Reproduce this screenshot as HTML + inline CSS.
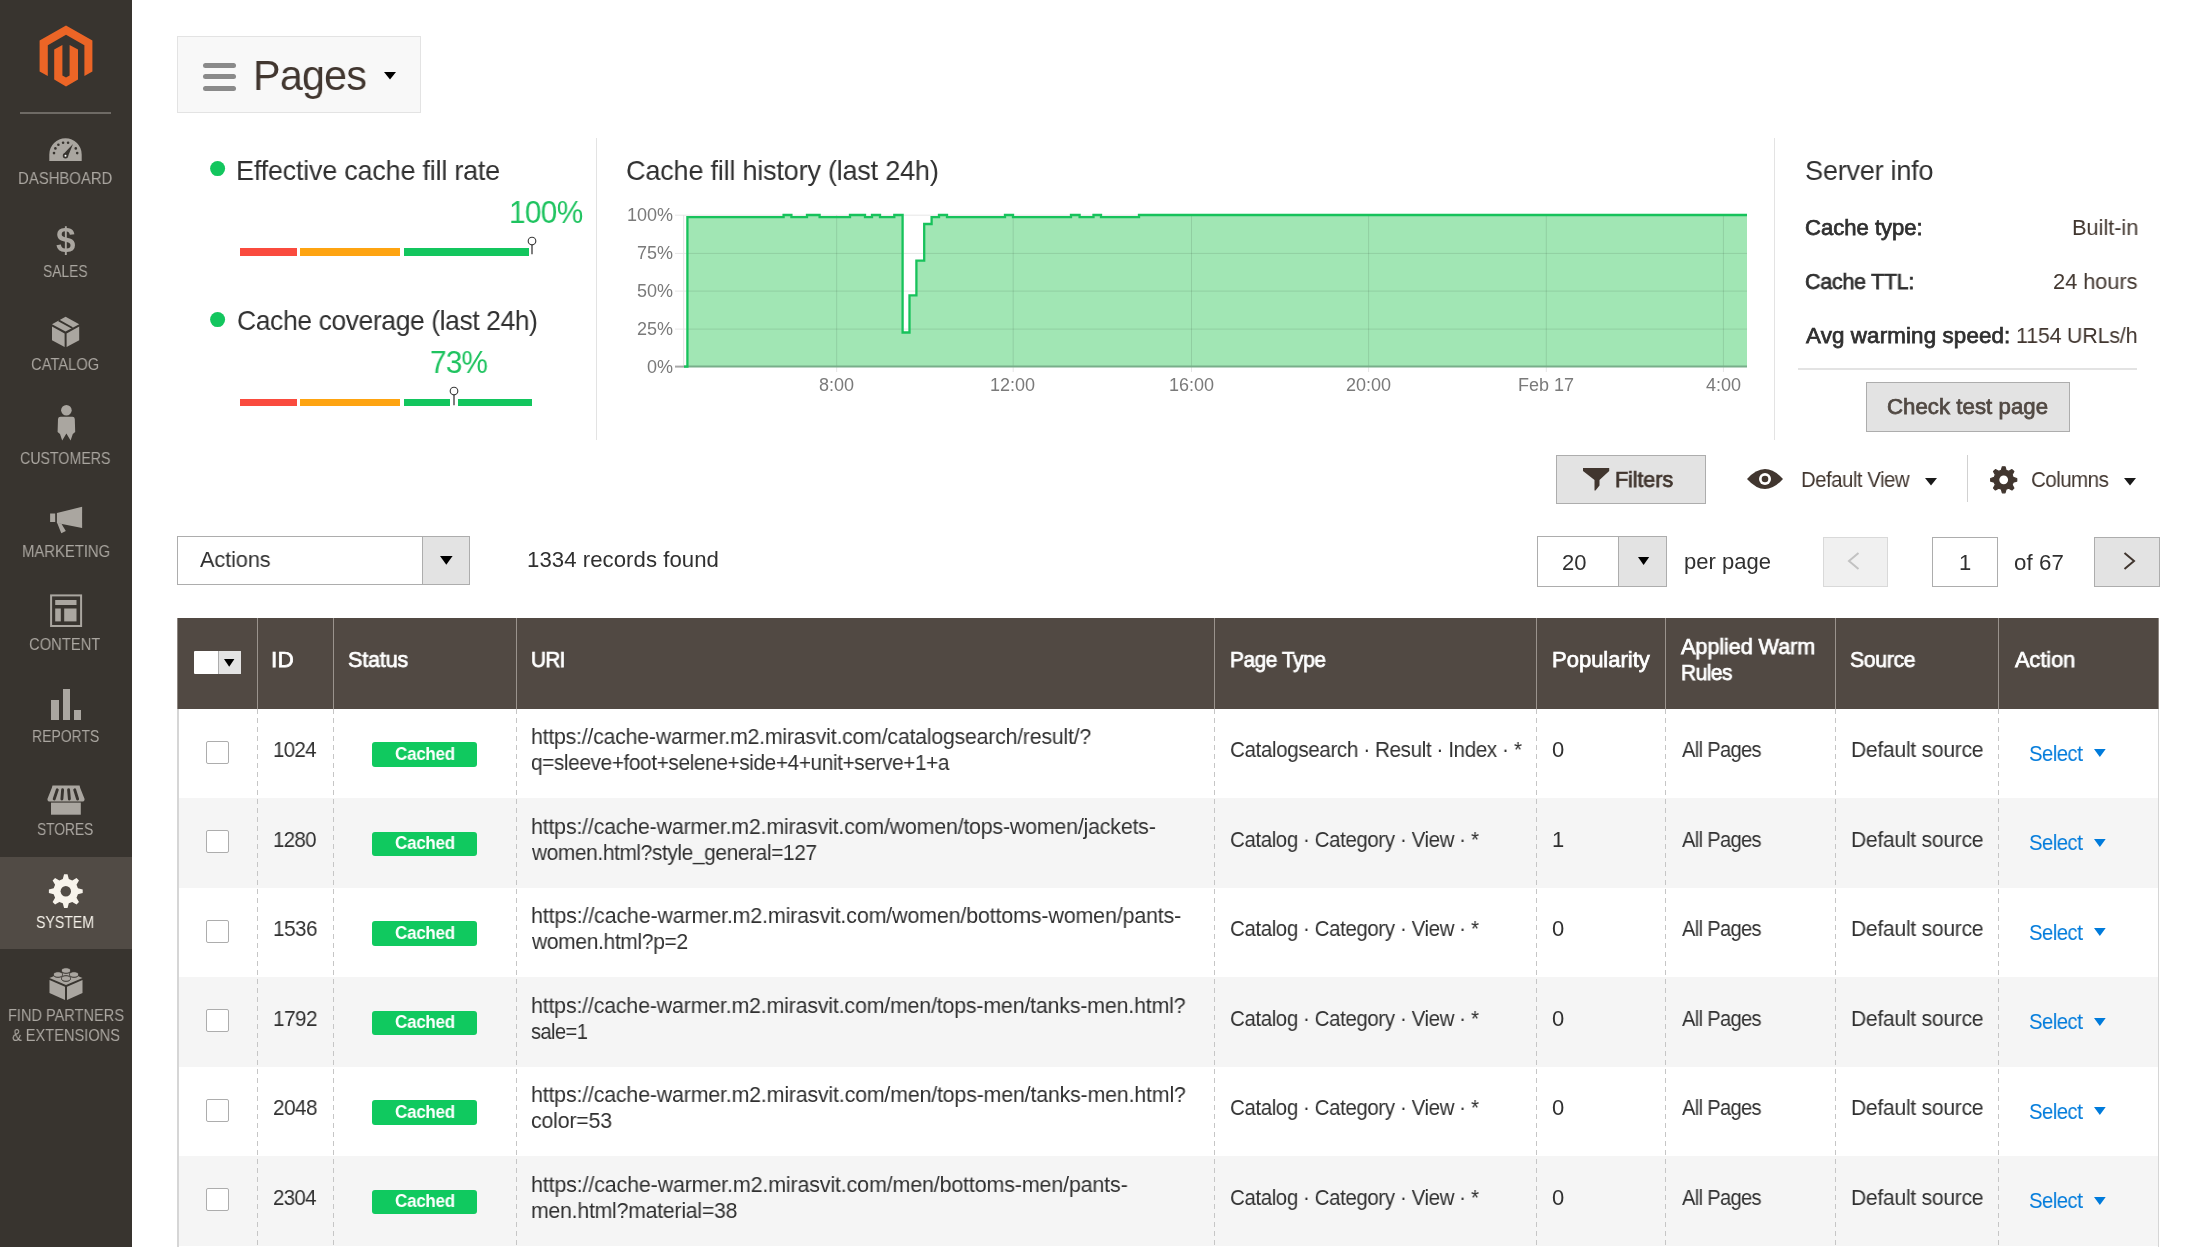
<!DOCTYPE html>
<html><head><meta charset="utf-8">
<style>
*{box-sizing:border-box;margin:0;padding:0}
html,body{width:2205px;height:1247px;overflow:hidden;background:#fff;font-family:"Liberation Sans",sans-serif;color:#303030;position:relative}
.t{position:absolute;white-space:nowrap;line-height:1;will-change:transform}
svg{position:absolute;overflow:visible}

</style></head><body>

<div style="position:absolute;left:0px;top:0px;width:132px;height:1247px;background:#38342f"></div>
<div style="position:absolute;left:0px;top:856.5px;width:132px;height:92.5px;background:#514b45"></div>
<svg style="left:0px;top:0px" width="132" height="100" viewBox="0 0 132 100"><path d="M66 25.6 L92.4 40.6 L92.4 71.6 L84.4 76.1 L84.4 45.2 L66 34.8 L47.8 45.2 L47.8 76.1 L39.6 71.6 L39.6 40.6 Z M54.2 49.6 L62.4 45 L62.4 75.4 L66 77.6 L69.6 75.4 L69.6 45 L78 49.6 L78 79.4 L66 86.4 L54.2 79.4 Z" fill="#ec6526"/></svg>
<div style="position:absolute;left:20px;top:112px;width:91px;height:2px;background:#6e6a65"></div>
<svg style="left:49px;top:138px" width="34" height="24" viewBox="0 0 34 24">
<path d="M0.3 16.5 A16.2 16.2 0 0 1 32.7 16.5 L32.7 23.1 L0.3 23.1 Z" fill="#aaa6a0"/>
<g fill="#38342f"><circle cx="5" cy="15.1" r="1.3"/><circle cx="6.4" cy="10.4" r="1.3"/><circle cx="9.4" cy="6.8" r="1.3"/><circle cx="14.1" cy="4.8" r="1.3"/><circle cx="19.1" cy="4.8" r="1.3"/><circle cx="26.8" cy="10.4" r="1.3"/><circle cx="28.2" cy="15.1" r="1.3"/>
<path d="M14.3 16.3 L24 6 L18.7 19 Z"/><circle cx="16.5" cy="17.7" r="2.7"/></g>
<circle cx="16.5" cy="17.7" r="1" fill="#fff"/>
</svg>
<svg style="left:0px;top:300px" width="132" height="150" viewBox="0 300 132 150">
<path d="M65.6 316.8 L79.2 324.2 L65.6 331.6 L52 324.2 Z" fill="#aaa6a0"/>
<path d="M52 326.6 L64.6 333.4 L64.6 347 L52 340.2 Z" fill="#aaa6a0"/>
<path d="M79.2 326.6 L66.6 333.4 L66.6 347 L79.2 340.2 Z" fill="#aaa6a0"/>
<path d="M58.6 320.4 L72.4 328" stroke="#38342f" stroke-width="1.8"/>
<circle cx="66.4" cy="410.2" r="5.3" fill="#aaa6a0"/>
<path d="M60.5 416.8 L72.5 416.8 Q74.6 416.8 74.8 419 L75.2 432 L72.8 434 L70.6 440.4 L66.4 433.5 L62.2 440.4 L60 434 L57.6 432 L58 419 Q58.2 416.8 60.5 416.8 Z" fill="#aaa6a0"/>
</svg>
<svg style="left:0px;top:490px" width="132" height="150" viewBox="0 490 132 150">
<path d="M50.1 513.5 L55.2 513.5 L55.2 522 L50.1 522 Z" fill="#aaa6a0"/>
<path d="M56.9 513 L82.1 506.8 L82.1 528.1 L56.9 523 Z" fill="#aaa6a0"/>
<path d="M57.1 522.8 L61.3 523.6 L65.8 531 L61.3 533.2 Z" fill="#aaa6a0"/>
<rect x="51.1" y="595.4" width="30" height="30.6" fill="none" stroke="#aaa6a0" stroke-width="2"/>
<rect x="55.2" y="600" width="21.3" height="5" fill="#aaa6a0"/>
<rect x="55.2" y="608.5" width="5.6" height="12.9" fill="#aaa6a0"/>
<rect x="64.2" y="608.5" width="12.3" height="12.9" fill="#aaa6a0"/>
</svg>
<div style="position:absolute;left:51px;top:699.6px;width:7.5px;height:20.399999999999977px;background:#aaa6a0"></div>
<div style="position:absolute;left:63px;top:688.8px;width:7px;height:31.200000000000045px;background:#aaa6a0"></div>
<div style="position:absolute;left:73.7px;top:709.7px;width:6.8999999999999915px;height:10.299999999999955px;background:#aaa6a0"></div>
<svg style="left:0px;top:770px" width="132" height="50" viewBox="0 770 132 50">
<path d="M52.5 785.6 L79.6 785.6 L80.2 788 L84.6 799 Q84.6 801.6 82 801.6 L50 801.6 Q47.4 801.6 47.4 799 L51.8 788 Z" fill="#aaa6a0"/>
<g stroke="#38342f" stroke-width="2.9" stroke-linecap="round"><path d="M57.3 789.8 L54.2 799"/><path d="M62.6 789.8 L61.9 799"/><path d="M68.6 789.8 L69.4 799"/><path d="M74.7 789.8 L77.6 799"/></g>
<rect x="51" y="802.6" width="29.8" height="12.1" fill="#aaa6a0"/>
</svg>
<svg style="left:49px;top:873.5px" width="34" height="35" viewBox="0 0 34 35"><path d="M28.93 14.19 L33.71 15.47 L33.71 18.93 L28.93 20.21 L27.51 23.65 L29.98 27.93 L27.53 30.38 L23.25 27.91 L19.81 29.33 L18.53 34.11 L15.07 34.11 L13.79 29.33 L10.35 27.91 L6.07 30.38 L3.62 27.93 L6.09 23.65 L4.67 20.21 L-0.11 18.93 L-0.11 15.47 L4.67 14.19 L6.09 10.75 L3.62 6.47 L6.07 4.02 L10.35 6.49 L13.79 5.07 L15.07 0.29 L18.53 0.29 L19.81 5.07 L23.25 6.49 L27.53 4.02 L29.98 6.47 L27.51 10.75 Z" fill="#f7f3eb"/><circle cx="16.8" cy="17.2" r="5.2" fill="#514b45"/></svg>
<svg style="left:49px;top:967px" width="34" height="33" viewBox="0 0 34 33">
<path d="M17 4 L33.5 11 L17 18 L0.5 11 Z" fill="#aaa6a0"/>
<path d="M0.5 13 L16 19.7 L16 33 L0.5 26 Z" fill="#aaa6a0"/>
<path d="M33.5 13 L18 19.7 L18 33 L33.5 26 Z" fill="#aaa6a0"/>
<g fill="#aaa6a0" stroke="#38342f" stroke-width="1"><ellipse cx="17" cy="3.5" rx="4.5" ry="2.8"/><ellipse cx="9" cy="7.5" rx="4.5" ry="2.8"/><ellipse cx="25" cy="7.5" rx="4.5" ry="2.8"/><ellipse cx="17" cy="11.5" rx="4.5" ry="2.8"/></g>
</svg>
<div style="position:absolute;left:177px;top:36px;width:244px;height:76.5px;background:#f8f8f8;border:1px solid #e3e3e3"></div>
<div style="position:absolute;left:202.8px;top:63px;width:33.099999999999994px;height:5px;background:#8a8a8a;border-radius:2.5px"></div>
<div style="position:absolute;left:202.8px;top:74px;width:33.099999999999994px;height:5px;background:#8a8a8a;border-radius:2.5px"></div>
<div style="position:absolute;left:202.8px;top:85.5px;width:33.099999999999994px;height:5.0px;background:#8a8a8a;border-radius:2.5px"></div>
<svg style="left:383.5px;top:72.4px" width="12" height="8" viewBox="0 0 12 8"><path d="M0 0 L12 0 L6 7.6 Z" fill="#000"/></svg>
<svg style="left:210px;top:161px" width="15" height="15"><circle cx="7.6" cy="7.6" r="7.5" fill="#13c65e"/></svg>
<svg style="left:210px;top:311.5px" width="15" height="15"><circle cx="7.6" cy="7.6" r="7.5" fill="#13c65e"/></svg>
<div style="position:absolute;left:239.8px;top:248.4px;width:57.099999999999966px;height:7.199999999999989px;background:#fa4b3e"></div>
<div style="position:absolute;left:300px;top:248.4px;width:100.39999999999998px;height:7.199999999999989px;background:#fea411"></div>
<div style="position:absolute;left:239.8px;top:398.9px;width:57.099999999999966px;height:7.199999999999989px;background:#fa4b3e"></div>
<div style="position:absolute;left:300px;top:398.9px;width:100.39999999999998px;height:7.199999999999989px;background:#fea411"></div>
<div style="position:absolute;left:403.8px;top:248.4px;width:124.80000000000001px;height:7.199999999999989px;background:#13c65e"></div>
<div style="position:absolute;left:403.8px;top:398.9px;width:46.0px;height:7.2000000000000455px;background:#13c65e"></div>
<div style="position:absolute;left:457.9px;top:398.9px;width:74.5px;height:7.2000000000000455px;background:#13c65e"></div>
<svg style="left:526.4px;top:235.3px" width="12" height="19.19999999999999"><circle cx="6" cy="6" r="3.8" fill="#fff" stroke="#3a3a3a" stroke-width="1.15"/><path d="M6 9.7 L6 19.19999999999999" stroke="#3a3a3a" stroke-width="1.3"/></svg>
<svg style="left:447.8px;top:385.2px" width="12" height="20.30000000000001"><circle cx="6" cy="6" r="3.8" fill="#fff" stroke="#3a3a3a" stroke-width="1.15"/><path d="M6 9.7 L6 20.30000000000001" stroke="#3a3a3a" stroke-width="1.3"/></svg>
<div style="position:absolute;left:596px;top:138px;width:1px;height:302px;background:#e3e3e3"></div>
<div style="position:absolute;left:1774px;top:138px;width:1px;height:302px;background:#e3e3e3"></div>
<svg style="left:660px;top:200px" width="1100" height="180" viewBox="0 0 1100 180">
<path d="M24.0 166.6 L27.4 166.6 L27.4 17.1 L123.6 17.1 L123.6 15.0 L131.4 15.0 L131.4 17.1 L147.0 17.1 L147.0 15.0 L159.6 15.0 L159.6 17.1 L190.0 17.1 L190.0 15.0 L205.0 15.0 L205.0 17.1 L212.0 17.1 L212.0 15.0 L220.0 15.0 L220.0 17.1 L234.3 17.1 L234.3 15.0 L242.6 15.0 L242.6 132.5 L249.5 132.5 L249.5 95.4 L256.4 95.4 L256.4 60.6 L264.2 60.6 L264.2 24.0 L271.6 24.0 L271.6 17.1 L279.0 17.1 L279.0 15.0 L287.0 15.0 L287.0 17.1 L345.0 17.1 L345.0 15.0 L353.0 15.0 L353.0 17.1 L411.0 17.1 L411.0 15.0 L419.6 15.0 L419.6 17.1 L433.5 17.1 L433.5 15.0 L441.0 15.0 L441.0 17.1 L479.0 17.1 L479.0 15.0 L1087.0 15.0 L1087.0 166.6 Z" fill="#a1e6b4"/>
<path d="M15.0 15.2 L1087.0 15.2" stroke="rgba(0,0,0,0.10)" stroke-width="1"/><path d="M15.0 53.4 L1087.0 53.4" stroke="rgba(0,0,0,0.10)" stroke-width="1"/><path d="M15.0 91.1 L1087.0 91.1" stroke="rgba(0,0,0,0.10)" stroke-width="1"/><path d="M15.0 129.1 L1087.0 129.1" stroke="rgba(0,0,0,0.10)" stroke-width="1"/><path d="M176.7 15.0 L176.7 172.0" stroke="rgba(0,0,0,0.10)" stroke-width="1"/><path d="M353.2 15.0 L353.2 172.0" stroke="rgba(0,0,0,0.10)" stroke-width="1"/><path d="M531.5 15.0 L531.5 172.0" stroke="rgba(0,0,0,0.10)" stroke-width="1"/><path d="M708.6 15.0 L708.6 172.0" stroke="rgba(0,0,0,0.10)" stroke-width="1"/><path d="M886.3 15.0 L886.3 172.0" stroke="rgba(0,0,0,0.10)" stroke-width="1"/><path d="M1063.4 15.0 L1063.4 172.0" stroke="rgba(0,0,0,0.10)" stroke-width="1"/>
<path d="M23.7 15.0 L23.7 166.0" stroke="#e2e2e2" stroke-width="1"/>
<path d="M15.0 166.6 L24.0 166.6" stroke="#a8a8a8" stroke-width="2"/>
<path d="M24.0 166.6 L1087.0 166.6" stroke="#78ae8a" stroke-width="2"/>
<path d="M24.0 166.6 L27.4 166.6 L27.4 17.1 L123.6 17.1 L123.6 15.0 L131.4 15.0 L131.4 17.1 L147.0 17.1 L147.0 15.0 L159.6 15.0 L159.6 17.1 L190.0 17.1 L190.0 15.0 L205.0 15.0 L205.0 17.1 L212.0 17.1 L212.0 15.0 L220.0 15.0 L220.0 17.1 L234.3 17.1 L234.3 15.0 L242.6 15.0 L242.6 132.5 L249.5 132.5 L249.5 95.4 L256.4 95.4 L256.4 60.6 L264.2 60.6 L264.2 24.0 L271.6 24.0 L271.6 17.1 L279.0 17.1 L279.0 15.0 L287.0 15.0 L287.0 17.1 L345.0 17.1 L345.0 15.0 L353.0 15.0 L353.0 17.1 L411.0 17.1 L411.0 15.0 L419.6 15.0 L419.6 17.1 L433.5 17.1 L433.5 15.0 L441.0 15.0 L441.0 17.1 L479.0 17.1 L479.0 15.0 L1087.0 15.0" fill="none" stroke="#17c25b" stroke-width="2.3" stroke-linejoin="miter"/>
</svg>
<div style="position:absolute;left:1798px;top:368px;width:339px;height:1.5px;background:#e3e3e3"></div>
<div style="position:absolute;left:1865.7px;top:382px;width:203.89999999999986px;height:49.5px;background:#e3e3e3;border:1px solid #adadad"></div>
<div style="position:absolute;left:1556px;top:455px;width:149.5999999999999px;height:48.5px;background:#e3e3e3;border:1px solid #adadad"></div>
<svg style="left:1582.5px;top:468px" width="27" height="23" viewBox="0 0 27 23"><path d="M0 0 L26.2 0 L26.2 3 L16.5 12 L16.5 17.5 L12.5 22.5 L11.5 22.5 L11.5 12 L0 3 Z" fill="#41362f"/></svg>
<svg style="left:1746.8px;top:468.8px" width="36" height="20" viewBox="0 0 36 20"><path d="M0 10 Q18 -10 36 10 Q18 30 0 10 Z" fill="#41362f"/><circle cx="18" cy="10" r="6" fill="#fff"/><circle cx="18" cy="10" r="3.3" fill="#41362f"/></svg>
<svg style="left:1925px;top:477.5px" width="12" height="8"><path d="M0 0 L12 0 L6 7.5 Z" fill="#1a1a1a"/></svg>
<div style="position:absolute;left:1966.5px;top:455px;width:1.5px;height:47px;background:#d1d1d1"></div>
<svg style="left:1990px;top:466px" width="28" height="28" viewBox="0 0 28 28"><path d="M23.21 11.44 L26.73 12.46 L26.73 15.14 L23.21 16.16 L22.10 18.85 L23.86 22.07 L21.97 23.96 L18.75 22.20 L16.06 23.31 L15.04 26.83 L12.36 26.83 L11.34 23.31 L8.65 22.20 L5.43 23.96 L3.54 22.07 L5.30 18.85 L4.19 16.16 L0.67 15.14 L0.67 12.46 L4.19 11.44 L5.30 8.75 L3.54 5.53 L5.43 3.64 L8.65 5.40 L11.34 4.29 L12.36 0.77 L15.04 0.77 L16.06 4.29 L18.75 5.40 L21.97 3.64 L23.86 5.53 L22.10 8.75 Z" fill="#41362f" stroke="#41362f" stroke-width="1.2" stroke-linejoin="round"/><circle cx="13.7" cy="13.8" r="4.4" fill="#fff"/></svg>
<svg style="left:2124px;top:477.5px" width="12" height="8"><path d="M0 0 L12 0 L6 7.5 Z" fill="#1a1a1a"/></svg>
<div style="position:absolute;left:177.4px;top:536px;width:292.6px;height:48.5px;background:#fff;border:1px solid #adadad"></div>
<div style="position:absolute;left:422.2px;top:537px;width:46.80000000000001px;height:46.5px;background:#e3e3e3;border-left:1px solid #adadad"></div>
<svg style="left:440px;top:556.3px" width="13" height="9"><path d="M0 0 L12.6 0 L6.3 8.7 Z" fill="#000"/></svg>
<div style="position:absolute;left:1537.4px;top:536px;width:129.19999999999982px;height:50.5px;background:#fff;border:1px solid #adadad"></div>
<div style="position:absolute;left:1617.8px;top:537px;width:47.799999999999955px;height:48.5px;background:#e3e3e3;border-left:1px solid #adadad"></div>
<svg style="left:1637.5px;top:557.3px" width="12" height="8"><path d="M0 0 L11.2 0 L5.6 8 Z" fill="#000"/></svg>
<div style="position:absolute;left:1823px;top:537px;width:65px;height:49.5px;background:#f0f0f0;border:1px solid #d9d9d9"></div>
<svg style="left:1847px;top:552px" width="13" height="18"><path d="M11.5 1 L2 9 L11.5 17" fill="none" stroke="#c2c2c2" stroke-width="2"/></svg>
<div style="position:absolute;left:1932px;top:537px;width:65.5px;height:49.5px;background:#fff;border:1px solid #adadad"></div>
<div style="position:absolute;left:2094px;top:537px;width:65.5px;height:49.5px;background:#e3e3e3;border:1px solid #adadad"></div>
<svg style="left:2122.5px;top:552px" width="13" height="18"><path d="M1.5 1 L11 9 L1.5 17" fill="none" stroke="#41362f" stroke-width="2"/></svg>
<div style="position:absolute;left:177.4px;top:617.5px;width:1982.0px;height:91.0px;background:#514943"></div>
<div style="position:absolute;left:257.0px;top:617.5px;width:1.0px;height:91.0px;background:#9a938d"></div>
<div style="position:absolute;left:333.0px;top:617.5px;width:1.0px;height:91.0px;background:#9a938d"></div>
<div style="position:absolute;left:516.0px;top:617.5px;width:1.0px;height:91.0px;background:#9a938d"></div>
<div style="position:absolute;left:1214.0px;top:617.5px;width:1.0px;height:91.0px;background:#9a938d"></div>
<div style="position:absolute;left:1536.0px;top:617.5px;width:1.0px;height:91.0px;background:#9a938d"></div>
<div style="position:absolute;left:1665.0px;top:617.5px;width:1.0px;height:91.0px;background:#9a938d"></div>
<div style="position:absolute;left:1835.0px;top:617.5px;width:1.0px;height:91.0px;background:#9a938d"></div>
<div style="position:absolute;left:1998.0px;top:617.5px;width:1.0px;height:91.0px;background:#9a938d"></div>
<div style="position:absolute;left:177.4px;top:617.5px;width:1.0px;height:91.0px;background:#8d8681"></div>
<div style="position:absolute;left:2158.4px;top:617.5px;width:1.0px;height:91.0px;background:#8d8681"></div>
<div style="position:absolute;left:194.3px;top:650.6px;width:46.39999999999998px;height:23.799999999999955px;background:#fff;border-radius:1px"></div>
<div style="position:absolute;left:217.5px;top:650.6px;width:23.19999999999999px;height:23.799999999999955px;background:#e3e3e3;border-left:1px solid #adadad;border-radius:0 1px 1px 0"></div>
<svg style="left:224px;top:658.8px" width="11" height="8"><path d="M0 0 L10.4 0 L5.2 7.8 Z" fill="#000"/></svg>
<div style="position:absolute;left:177.4px;top:708.5px;width:1982.0px;height:89.5px;background:#ffffff"></div>
<div style="position:absolute;left:205.6px;top:740.6px;width:23.400000000000006px;height:23.399999999999977px;background:#fff;border:1px solid #adadad;border-radius:2px"></div>
<div style="position:absolute;left:372.1px;top:742.0px;width:104.59999999999997px;height:24.799999999999955px;background:#10c95f;border-radius:3px"></div>
<svg style="left:2094.3px;top:749.0px" width="12" height="8"><path d="M0 0 L11.7 0 L5.85 8 Z" fill="#007bdb"/></svg>
<div style="position:absolute;left:177.4px;top:798.0px;width:1982.0px;height:89.5px;background:#f5f5f5"></div>
<div style="position:absolute;left:205.6px;top:830.1px;width:23.400000000000006px;height:23.399999999999977px;background:#fff;border:1px solid #adadad;border-radius:2px"></div>
<div style="position:absolute;left:372.1px;top:831.5px;width:104.59999999999997px;height:24.799999999999955px;background:#10c95f;border-radius:3px"></div>
<svg style="left:2094.3px;top:838.5px" width="12" height="8"><path d="M0 0 L11.7 0 L5.85 8 Z" fill="#007bdb"/></svg>
<div style="position:absolute;left:177.4px;top:887.5px;width:1982.0px;height:89.5px;background:#ffffff"></div>
<div style="position:absolute;left:205.6px;top:919.6px;width:23.400000000000006px;height:23.399999999999977px;background:#fff;border:1px solid #adadad;border-radius:2px"></div>
<div style="position:absolute;left:372.1px;top:921.0px;width:104.59999999999997px;height:24.799999999999955px;background:#10c95f;border-radius:3px"></div>
<svg style="left:2094.3px;top:928.0px" width="12" height="8"><path d="M0 0 L11.7 0 L5.85 8 Z" fill="#007bdb"/></svg>
<div style="position:absolute;left:177.4px;top:977.0px;width:1982.0px;height:89.5px;background:#f5f5f5"></div>
<div style="position:absolute;left:205.6px;top:1009.1px;width:23.400000000000006px;height:23.399999999999977px;background:#fff;border:1px solid #adadad;border-radius:2px"></div>
<div style="position:absolute;left:372.1px;top:1010.5px;width:104.59999999999997px;height:24.799999999999955px;background:#10c95f;border-radius:3px"></div>
<svg style="left:2094.3px;top:1017.5px" width="12" height="8"><path d="M0 0 L11.7 0 L5.85 8 Z" fill="#007bdb"/></svg>
<div style="position:absolute;left:177.4px;top:1066.5px;width:1982.0px;height:89.5px;background:#ffffff"></div>
<div style="position:absolute;left:205.6px;top:1098.6px;width:23.400000000000006px;height:23.40000000000009px;background:#fff;border:1px solid #adadad;border-radius:2px"></div>
<div style="position:absolute;left:372.1px;top:1100.0px;width:104.59999999999997px;height:24.799999999999955px;background:#10c95f;border-radius:3px"></div>
<svg style="left:2094.3px;top:1107.0px" width="12" height="8"><path d="M0 0 L11.7 0 L5.85 8 Z" fill="#007bdb"/></svg>
<div style="position:absolute;left:177.4px;top:1156.0px;width:1982.0px;height:89.5px;background:#f5f5f5"></div>
<div style="position:absolute;left:205.6px;top:1188.1px;width:23.400000000000006px;height:23.40000000000009px;background:#fff;border:1px solid #adadad;border-radius:2px"></div>
<div style="position:absolute;left:372.1px;top:1189.5px;width:104.59999999999997px;height:24.799999999999955px;background:#10c95f;border-radius:3px"></div>
<svg style="left:2094.3px;top:1196.5px" width="12" height="8"><path d="M0 0 L11.7 0 L5.85 8 Z" fill="#007bdb"/></svg>
<div style="position:absolute;left:257.0px;top:708.5px;width:1.0px;height:538.5px;background:repeating-linear-gradient(to bottom,#c6c6c6 0,#c6c6c6 5px,transparent 5px,transparent 9px)"></div>
<div style="position:absolute;left:333.0px;top:708.5px;width:1.0px;height:538.5px;background:repeating-linear-gradient(to bottom,#c6c6c6 0,#c6c6c6 5px,transparent 5px,transparent 9px)"></div>
<div style="position:absolute;left:516.0px;top:708.5px;width:1.0px;height:538.5px;background:repeating-linear-gradient(to bottom,#c6c6c6 0,#c6c6c6 5px,transparent 5px,transparent 9px)"></div>
<div style="position:absolute;left:1214.0px;top:708.5px;width:1.0px;height:538.5px;background:repeating-linear-gradient(to bottom,#c6c6c6 0,#c6c6c6 5px,transparent 5px,transparent 9px)"></div>
<div style="position:absolute;left:1536.0px;top:708.5px;width:1.0px;height:538.5px;background:repeating-linear-gradient(to bottom,#c6c6c6 0,#c6c6c6 5px,transparent 5px,transparent 9px)"></div>
<div style="position:absolute;left:1665.0px;top:708.5px;width:1.0px;height:538.5px;background:repeating-linear-gradient(to bottom,#c6c6c6 0,#c6c6c6 5px,transparent 5px,transparent 9px)"></div>
<div style="position:absolute;left:1835.0px;top:708.5px;width:1.0px;height:538.5px;background:repeating-linear-gradient(to bottom,#c6c6c6 0,#c6c6c6 5px,transparent 5px,transparent 9px)"></div>
<div style="position:absolute;left:1998.0px;top:708.5px;width:1.0px;height:538.5px;background:repeating-linear-gradient(to bottom,#c6c6c6 0,#c6c6c6 5px,transparent 5px,transparent 9px)"></div>
<div style="position:absolute;left:177.4px;top:708.5px;width:1.1999999999999886px;height:538.5px;background:#d6d6d6"></div>
<div style="position:absolute;left:2158.2000000000003px;top:708.5px;width:1.199999999999818px;height:538.5px;background:#d6d6d6"></div>
<span class="t" style="left:18.10px;top:170.38px;font-size:16.5px;font-weight:400;color:#aaa6a0;letter-spacing:0.000px;transform:scaleX(0.9029);transform-origin:0 0;">DASHBOARD</span>
<span class="t" style="left:43.11px;top:263.38px;font-size:16.5px;font-weight:400;color:#aaa6a0;letter-spacing:0.000px;transform:scaleX(0.8365);transform-origin:0 0;">SALES</span>
<span class="t" style="left:31.11px;top:355.98px;font-size:16.5px;font-weight:400;color:#aaa6a0;letter-spacing:0.000px;transform:scaleX(0.8933);transform-origin:0 0;">CATALOG</span>
<span class="t" style="left:19.59px;top:449.58px;font-size:16.5px;font-weight:400;color:#aaa6a0;letter-spacing:0.000px;transform:scaleX(0.8606);transform-origin:0 0;">CUSTOMERS</span>
<span class="t" style="left:21.75px;top:542.68px;font-size:16.5px;font-weight:400;color:#aaa6a0;letter-spacing:0.000px;transform:scaleX(0.8990);transform-origin:0 0;">MARKETING</span>
<span class="t" style="left:29.11px;top:635.77px;font-size:16.5px;font-weight:400;color:#aaa6a0;letter-spacing:0.000px;transform:scaleX(0.8937);transform-origin:0 0;">CONTENT</span>
<span class="t" style="left:32.15px;top:728.27px;font-size:16.5px;font-weight:400;color:#aaa6a0;letter-spacing:0.000px;transform:scaleX(0.8462);transform-origin:0 0;">REPORTS</span>
<span class="t" style="left:37.17px;top:821.48px;font-size:16.5px;font-weight:400;color:#aaa6a0;letter-spacing:0.000px;transform:scaleX(0.8333);transform-origin:0 0;">STORES</span>
<span class="t" style="left:36.09px;top:914.18px;font-size:16.5px;font-weight:400;color:#f7f3eb;letter-spacing:0.000px;transform:scaleX(0.8561);transform-origin:0 0;">SYSTEM</span>
<span class="t" style="left:7.87px;top:1006.98px;font-size:16.5px;font-weight:400;color:#aaa6a0;letter-spacing:0.000px;transform:scaleX(0.8823);transform-origin:0 0;">FIND PARTNERS</span>
<span class="t" style="left:12.00px;top:1026.97px;font-size:16.5px;font-weight:400;color:#aaa6a0;letter-spacing:0.000px;transform:scaleX(0.8852);transform-origin:0 0;">&amp; EXTENSIONS</span>
<span class="t" style="left:55.90px;top:221.55px;font-size:35px;font-weight:700;color:#aaa6a0;letter-spacing:0.000px;">$</span>
<span class="t" style="left:253.42px;top:54.25px;font-size:43px;font-weight:400;color:#41362f;letter-spacing:-0.796px;transform:scaleX(0.9598);transform-origin:0 0;">Pages</span>
<span class="t" style="left:236.37px;top:157.30px;font-size:28px;font-weight:400;color:#303030;letter-spacing:-0.261px;transform:scaleX(0.9663);transform-origin:0 0;">Effective cache fill rate</span>
<span class="t" style="left:509.08px;top:196.65px;font-size:31px;font-weight:400;color:#1ec35f;letter-spacing:-0.680px;transform:scaleX(0.9605);transform-origin:0 0;">100%</span>
<span class="t" style="left:237.35px;top:307.10px;font-size:28px;font-weight:400;color:#303030;letter-spacing:-0.467px;transform:scaleX(0.9489);transform-origin:0 0;">Cache coverage (last 24h)</span>
<span class="t" style="left:430.44px;top:347.15px;font-size:31px;font-weight:400;color:#1ec35f;letter-spacing:-0.817px;transform:scaleX(0.9594);transform-origin:0 0;">73%</span>
<span class="t" style="left:626.33px;top:157.40px;font-size:28px;font-weight:400;color:#303030;letter-spacing:-0.247px;transform:scaleX(0.9685);transform-origin:0 0;">Cache fill history (last 24h)</span>
<span class="t" style="left:627.00px;top:206.30px;font-size:18px;font-weight:400;color:#7a7a7a;letter-spacing:0.000px;">100%</span>
<span class="t" style="left:637.00px;top:244.10px;font-size:18px;font-weight:400;color:#7a7a7a;letter-spacing:0.000px;">75%</span>
<span class="t" style="left:637.00px;top:282.40px;font-size:18px;font-weight:400;color:#7a7a7a;letter-spacing:0.000px;">50%</span>
<span class="t" style="left:637.00px;top:320.30px;font-size:18px;font-weight:400;color:#7a7a7a;letter-spacing:0.000px;">25%</span>
<span class="t" style="left:647.00px;top:358.10px;font-size:18px;font-weight:400;color:#7a7a7a;letter-spacing:0.000px;">0%</span>
<span class="t" style="left:818.70px;top:376.00px;font-size:18px;font-weight:400;color:#7a7a7a;letter-spacing:0.000px;">8:00</span>
<span class="t" style="left:990.20px;top:376.00px;font-size:18px;font-weight:400;color:#7a7a7a;letter-spacing:0.000px;">12:00</span>
<span class="t" style="left:1168.50px;top:376.00px;font-size:18px;font-weight:400;color:#7a7a7a;letter-spacing:0.000px;">16:00</span>
<span class="t" style="left:1345.60px;top:376.00px;font-size:18px;font-weight:400;color:#7a7a7a;letter-spacing:0.000px;">20:00</span>
<span class="t" style="left:1517.80px;top:376.00px;font-size:18px;font-weight:400;color:#7a7a7a;letter-spacing:0.000px;">Feb 17</span>
<span class="t" style="left:1705.90px;top:376.00px;font-size:18px;font-weight:400;color:#7a7a7a;letter-spacing:0.000px;">4:00</span>
<span class="t" style="left:1805.33px;top:156.90px;font-size:28px;font-weight:400;color:#303030;letter-spacing:-0.276px;transform:scaleX(0.9692);transform-origin:0 0;">Server info</span>
<span class="t" style="left:1805.30px;top:216.70px;font-size:22px;font-weight:400;-webkit-text-stroke:0.75px #303030;color:#303030;letter-spacing:0.012px;transform:scaleX(1.0016);transform-origin:0 0;">Cache type:</span>
<span class="t" style="left:2071.71px;top:216.70px;font-size:22px;font-weight:400;color:#41362f;letter-spacing:-0.052px;transform:scaleX(0.9917);transform-origin:0 0;">Built-in</span>
<span class="t" style="left:1805.33px;top:271.20px;font-size:22px;font-weight:400;-webkit-text-stroke:0.75px #303030;color:#303030;letter-spacing:-0.230px;transform:scaleX(0.9724);transform-origin:0 0;">Cache TTL:</span>
<span class="t" style="left:2053.01px;top:271.20px;font-size:22px;font-weight:400;color:#41362f;letter-spacing:-0.069px;transform:scaleX(0.9914);transform-origin:0 0;">24 hours</span>
<span class="t" style="left:1806.30px;top:325.30px;font-size:22px;font-weight:400;-webkit-text-stroke:0.75px #303030;color:#303030;letter-spacing:0.124px;transform:scaleX(1.0161);transform-origin:0 0;">Avg warming speed:</span>
<span class="t" style="left:2016.03px;top:325.30px;font-size:22px;font-weight:400;color:#41362f;letter-spacing:-0.211px;transform:scaleX(0.9748);transform-origin:0 0;">1154 URLs/h</span>
<span class="t" style="left:1886.99px;top:395.90px;font-size:22px;font-weight:400;-webkit-text-stroke:0.75px #514943;color:#514943;letter-spacing:0.057px;transform:scaleX(1.0076);transform-origin:0 0;">Check test page</span>
<span class="t" style="left:1614.72px;top:468.60px;font-size:22px;font-weight:400;-webkit-text-stroke:0.75px #41362f;color:#41362f;letter-spacing:-0.114px;transform:scaleX(0.9826);transform-origin:0 0;">Filters</span>
<span class="t" style="left:1801.47px;top:468.60px;font-size:22px;font-weight:400;color:#41362f;letter-spacing:-0.547px;transform:scaleX(0.9269);transform-origin:0 0;">Default View</span>
<span class="t" style="left:2031.36px;top:468.60px;font-size:22px;font-weight:400;color:#41362f;letter-spacing:-0.613px;transform:scaleX(0.9358);transform-origin:0 0;">Columns</span>
<span class="t" style="left:199.80px;top:549.20px;font-size:22px;font-weight:400;color:#303030;letter-spacing:-0.101px;transform:scaleX(0.9874);transform-origin:0 0;">Actions</span>
<span class="t" style="left:526.99px;top:549.30px;font-size:22px;font-weight:400;color:#303030;letter-spacing:0.054px;transform:scaleX(1.0074);transform-origin:0 0;">1334 records found</span>
<span class="t" style="left:1562.30px;top:551.60px;font-size:22px;font-weight:400;color:#303030;letter-spacing:0.000px;">20</span>
<span class="t" style="left:1683.80px;top:551.30px;font-size:22px;font-weight:400;color:#303030;letter-spacing:0.011px;transform:scaleX(1.0014);transform-origin:0 0;">per page</span>
<span class="t" style="left:1958.70px;top:551.60px;font-size:22px;font-weight:400;color:#303030;letter-spacing:0.000px;">1</span>
<span class="t" style="left:2014.29px;top:551.60px;font-size:22px;font-weight:400;color:#303030;letter-spacing:0.099px;transform:scaleX(1.0127);transform-origin:0 0;">of 67</span>
<span class="t" style="left:271.15px;top:648.60px;font-size:22px;font-weight:400;-webkit-text-stroke:0.75px #ffffff;color:#ffffff;letter-spacing:0.316px;transform:scaleX(1.0251);transform-origin:0 0;">ID</span>
<span class="t" style="left:348.32px;top:648.60px;font-size:22px;font-weight:400;-webkit-text-stroke:0.75px #ffffff;color:#ffffff;letter-spacing:-0.170px;transform:scaleX(0.9792);transform-origin:0 0;">Status</span>
<span class="t" style="left:531.46px;top:648.60px;font-size:22px;font-weight:400;-webkit-text-stroke:0.75px #ffffff;color:#ffffff;letter-spacing:-0.701px;transform:scaleX(0.9405);transform-origin:0 0;">URI</span>
<span class="t" style="left:1229.75px;top:648.60px;font-size:22px;font-weight:400;-webkit-text-stroke:0.75px #ffffff;color:#ffffff;letter-spacing:-0.452px;transform:scaleX(0.9478);transform-origin:0 0;">Page Type</span>
<span class="t" style="left:1552.40px;top:648.60px;font-size:22px;font-weight:400;-webkit-text-stroke:0.75px #ffffff;color:#ffffff;letter-spacing:-0.004px;transform:scaleX(0.9994);transform-origin:0 0;">Popularity</span>
<span class="t" style="left:1681.30px;top:636.10px;font-size:22px;font-weight:400;-webkit-text-stroke:0.75px #ffffff;color:#ffffff;letter-spacing:-0.110px;transform:scaleX(0.9867);transform-origin:0 0;">Applied Warm</span>
<span class="t" style="left:1680.55px;top:661.70px;font-size:22px;font-weight:400;-webkit-text-stroke:0.75px #ffffff;color:#ffffff;letter-spacing:-0.483px;transform:scaleX(0.9478);transform-origin:0 0;">Rules</span>
<span class="t" style="left:1849.74px;top:648.60px;font-size:22px;font-weight:400;-webkit-text-stroke:0.75px #ffffff;color:#ffffff;letter-spacing:-0.334px;transform:scaleX(0.9634);transform-origin:0 0;">Source</span>
<span class="t" style="left:2014.70px;top:648.60px;font-size:22px;font-weight:400;-webkit-text-stroke:0.75px #ffffff;color:#ffffff;letter-spacing:-0.072px;transform:scaleX(0.9910);transform-origin:0 0;">Action</span>
<span class="t" style="left:273.37px;top:739.10px;font-size:22px;font-weight:400;color:#303030;letter-spacing:-0.746px;transform:scaleX(0.9309);transform-origin:0 0;">1024</span>
<span class="t" style="left:395.00px;top:745.73px;font-size:17.5px;font-weight:700;color:#ffffff;letter-spacing:-0.244px;transform:scaleX(0.9707);transform-origin:0 0;">Cached</span>
<span class="t" style="left:531.03px;top:726.40px;font-size:22px;font-weight:400;color:#303030;letter-spacing:-0.221px;transform:scaleX(0.9676);transform-origin:0 0;">https://cache-warmer.m2.mirasvit.com/catalogsearch/result/?</span>
<span class="t" style="left:531.05px;top:752.20px;font-size:22px;font-weight:400;color:#303030;letter-spacing:-0.409px;transform:scaleX(0.9457);transform-origin:0 0;">q=sleeve+foot+selene+side+4+unit+serve+1+a</span>
<span class="t" style="left:1229.56px;top:739.30px;font-size:22px;font-weight:400;color:#303030;letter-spacing:-0.416px;transform:scaleX(0.9372);transform-origin:0 0;">Catalogsearch · Result · Index · *</span>
<span class="t" style="left:1552.20px;top:739.30px;font-size:22px;font-weight:400;color:#303030;letter-spacing:0.000px;">0</span>
<span class="t" style="left:1681.80px;top:739.30px;font-size:22px;font-weight:400;color:#303030;letter-spacing:-0.696px;transform:scaleX(0.9116);transform-origin:0 0;">All Pages</span>
<span class="t" style="left:1850.84px;top:739.30px;font-size:22px;font-weight:400;color:#303030;letter-spacing:-0.289px;transform:scaleX(0.9600);transform-origin:0 0;">Default source</span>
<span class="t" style="left:2029.48px;top:742.80px;font-size:22px;font-weight:400;color:#007bdb;letter-spacing:-0.615px;transform:scaleX(0.9241);transform-origin:0 0;">Select</span>
<span class="t" style="left:273.37px;top:828.60px;font-size:22px;font-weight:400;color:#303030;letter-spacing:-0.746px;transform:scaleX(0.9309);transform-origin:0 0;">1280</span>
<span class="t" style="left:395.00px;top:835.23px;font-size:17.5px;font-weight:700;color:#ffffff;letter-spacing:-0.244px;transform:scaleX(0.9707);transform-origin:0 0;">Cached</span>
<span class="t" style="left:531.03px;top:815.90px;font-size:22px;font-weight:400;color:#303030;letter-spacing:-0.202px;transform:scaleX(0.9718);transform-origin:0 0;">https://cache-warmer.m2.mirasvit.com/women/tops-women/jackets-</span>
<span class="t" style="left:532.00px;top:841.70px;font-size:22px;font-weight:400;color:#303030;letter-spacing:-0.398px;transform:scaleX(0.9486);transform-origin:0 0;">women.html?style_general=127</span>
<span class="t" style="left:1229.57px;top:828.80px;font-size:22px;font-weight:400;color:#303030;letter-spacing:-0.451px;transform:scaleX(0.9326);transform-origin:0 0;">Catalog · Category · View · *</span>
<span class="t" style="left:1552.20px;top:828.80px;font-size:22px;font-weight:400;color:#303030;letter-spacing:0.000px;">1</span>
<span class="t" style="left:1681.80px;top:828.80px;font-size:22px;font-weight:400;color:#303030;letter-spacing:-0.696px;transform:scaleX(0.9116);transform-origin:0 0;">All Pages</span>
<span class="t" style="left:1850.84px;top:828.80px;font-size:22px;font-weight:400;color:#303030;letter-spacing:-0.289px;transform:scaleX(0.9600);transform-origin:0 0;">Default source</span>
<span class="t" style="left:2029.48px;top:832.30px;font-size:22px;font-weight:400;color:#007bdb;letter-spacing:-0.615px;transform:scaleX(0.9241);transform-origin:0 0;">Select</span>
<span class="t" style="left:273.36px;top:918.10px;font-size:22px;font-weight:400;color:#303030;letter-spacing:-0.604px;transform:scaleX(0.9427);transform-origin:0 0;">1536</span>
<span class="t" style="left:395.00px;top:924.73px;font-size:17.5px;font-weight:700;color:#ffffff;letter-spacing:-0.244px;transform:scaleX(0.9707);transform-origin:0 0;">Cached</span>
<span class="t" style="left:531.02px;top:905.40px;font-size:22px;font-weight:400;color:#303030;letter-spacing:-0.176px;transform:scaleX(0.9758);transform-origin:0 0;">https://cache-warmer.m2.mirasvit.com/women/bottoms-women/pants-</span>
<span class="t" style="left:532.00px;top:931.20px;font-size:22px;font-weight:400;color:#303030;letter-spacing:-0.377px;transform:scaleX(0.9565);transform-origin:0 0;">women.html?p=2</span>
<span class="t" style="left:1229.57px;top:918.30px;font-size:22px;font-weight:400;color:#303030;letter-spacing:-0.451px;transform:scaleX(0.9326);transform-origin:0 0;">Catalog · Category · View · *</span>
<span class="t" style="left:1552.20px;top:918.30px;font-size:22px;font-weight:400;color:#303030;letter-spacing:0.000px;">0</span>
<span class="t" style="left:1681.80px;top:918.30px;font-size:22px;font-weight:400;color:#303030;letter-spacing:-0.696px;transform:scaleX(0.9116);transform-origin:0 0;">All Pages</span>
<span class="t" style="left:1850.84px;top:918.30px;font-size:22px;font-weight:400;color:#303030;letter-spacing:-0.289px;transform:scaleX(0.9600);transform-origin:0 0;">Default source</span>
<span class="t" style="left:2029.48px;top:921.80px;font-size:22px;font-weight:400;color:#007bdb;letter-spacing:-0.615px;transform:scaleX(0.9241);transform-origin:0 0;">Select</span>
<span class="t" style="left:273.36px;top:1007.60px;font-size:22px;font-weight:400;color:#303030;letter-spacing:-0.604px;transform:scaleX(0.9427);transform-origin:0 0;">1792</span>
<span class="t" style="left:395.00px;top:1014.22px;font-size:17.5px;font-weight:700;color:#ffffff;letter-spacing:-0.244px;transform:scaleX(0.9707);transform-origin:0 0;">Cached</span>
<span class="t" style="left:531.03px;top:994.90px;font-size:22px;font-weight:400;color:#303030;letter-spacing:-0.198px;transform:scaleX(0.9723);transform-origin:0 0;">https://cache-warmer.m2.mirasvit.com/men/tops-men/tanks-men.html?</span>
<span class="t" style="left:531.08px;top:1020.70px;font-size:22px;font-weight:400;color:#303030;letter-spacing:-0.700px;transform:scaleX(0.9190);transform-origin:0 0;">sale=1</span>
<span class="t" style="left:1229.57px;top:1007.80px;font-size:22px;font-weight:400;color:#303030;letter-spacing:-0.451px;transform:scaleX(0.9326);transform-origin:0 0;">Catalog · Category · View · *</span>
<span class="t" style="left:1552.20px;top:1007.80px;font-size:22px;font-weight:400;color:#303030;letter-spacing:0.000px;">0</span>
<span class="t" style="left:1681.80px;top:1007.80px;font-size:22px;font-weight:400;color:#303030;letter-spacing:-0.696px;transform:scaleX(0.9116);transform-origin:0 0;">All Pages</span>
<span class="t" style="left:1850.84px;top:1007.80px;font-size:22px;font-weight:400;color:#303030;letter-spacing:-0.289px;transform:scaleX(0.9600);transform-origin:0 0;">Default source</span>
<span class="t" style="left:2029.48px;top:1011.30px;font-size:22px;font-weight:400;color:#007bdb;letter-spacing:-0.615px;transform:scaleX(0.9241);transform-origin:0 0;">Select</span>
<span class="t" style="left:273.36px;top:1097.10px;font-size:22px;font-weight:400;color:#303030;letter-spacing:-0.604px;transform:scaleX(0.9427);transform-origin:0 0;">2048</span>
<span class="t" style="left:395.00px;top:1103.72px;font-size:17.5px;font-weight:700;color:#ffffff;letter-spacing:-0.244px;transform:scaleX(0.9707);transform-origin:0 0;">Cached</span>
<span class="t" style="left:531.03px;top:1084.40px;font-size:22px;font-weight:400;color:#303030;letter-spacing:-0.196px;transform:scaleX(0.9726);transform-origin:0 0;">https://cache-warmer.m2.mirasvit.com/men/tops-men/tanks-men.html?</span>
<span class="t" style="left:531.03px;top:1110.20px;font-size:22px;font-weight:400;color:#303030;letter-spacing:-0.226px;transform:scaleX(0.9715);transform-origin:0 0;">color=53</span>
<span class="t" style="left:1229.57px;top:1097.30px;font-size:22px;font-weight:400;color:#303030;letter-spacing:-0.451px;transform:scaleX(0.9326);transform-origin:0 0;">Catalog · Category · View · *</span>
<span class="t" style="left:1552.20px;top:1097.30px;font-size:22px;font-weight:400;color:#303030;letter-spacing:0.000px;">0</span>
<span class="t" style="left:1681.80px;top:1097.30px;font-size:22px;font-weight:400;color:#303030;letter-spacing:-0.696px;transform:scaleX(0.9116);transform-origin:0 0;">All Pages</span>
<span class="t" style="left:1850.84px;top:1097.30px;font-size:22px;font-weight:400;color:#303030;letter-spacing:-0.289px;transform:scaleX(0.9600);transform-origin:0 0;">Default source</span>
<span class="t" style="left:2029.48px;top:1100.80px;font-size:22px;font-weight:400;color:#007bdb;letter-spacing:-0.615px;transform:scaleX(0.9241);transform-origin:0 0;">Select</span>
<span class="t" style="left:273.37px;top:1186.60px;font-size:22px;font-weight:400;color:#303030;letter-spacing:-0.746px;transform:scaleX(0.9309);transform-origin:0 0;">2304</span>
<span class="t" style="left:395.00px;top:1193.22px;font-size:17.5px;font-weight:700;color:#ffffff;letter-spacing:-0.244px;transform:scaleX(0.9707);transform-origin:0 0;">Cached</span>
<span class="t" style="left:531.02px;top:1173.90px;font-size:22px;font-weight:400;color:#303030;letter-spacing:-0.170px;transform:scaleX(0.9763);transform-origin:0 0;">https://cache-warmer.m2.mirasvit.com/men/bottoms-men/pants-</span>
<span class="t" style="left:531.03px;top:1199.70px;font-size:22px;font-weight:400;color:#303030;letter-spacing:-0.253px;transform:scaleX(0.9670);transform-origin:0 0;">men.html?material=38</span>
<span class="t" style="left:1229.57px;top:1186.80px;font-size:22px;font-weight:400;color:#303030;letter-spacing:-0.451px;transform:scaleX(0.9326);transform-origin:0 0;">Catalog · Category · View · *</span>
<span class="t" style="left:1552.20px;top:1186.80px;font-size:22px;font-weight:400;color:#303030;letter-spacing:0.000px;">0</span>
<span class="t" style="left:1681.80px;top:1186.80px;font-size:22px;font-weight:400;color:#303030;letter-spacing:-0.696px;transform:scaleX(0.9116);transform-origin:0 0;">All Pages</span>
<span class="t" style="left:1850.84px;top:1186.80px;font-size:22px;font-weight:400;color:#303030;letter-spacing:-0.289px;transform:scaleX(0.9600);transform-origin:0 0;">Default source</span>
<span class="t" style="left:2029.48px;top:1190.30px;font-size:22px;font-weight:400;color:#007bdb;letter-spacing:-0.615px;transform:scaleX(0.9241);transform-origin:0 0;">Select</span>
</body></html>
